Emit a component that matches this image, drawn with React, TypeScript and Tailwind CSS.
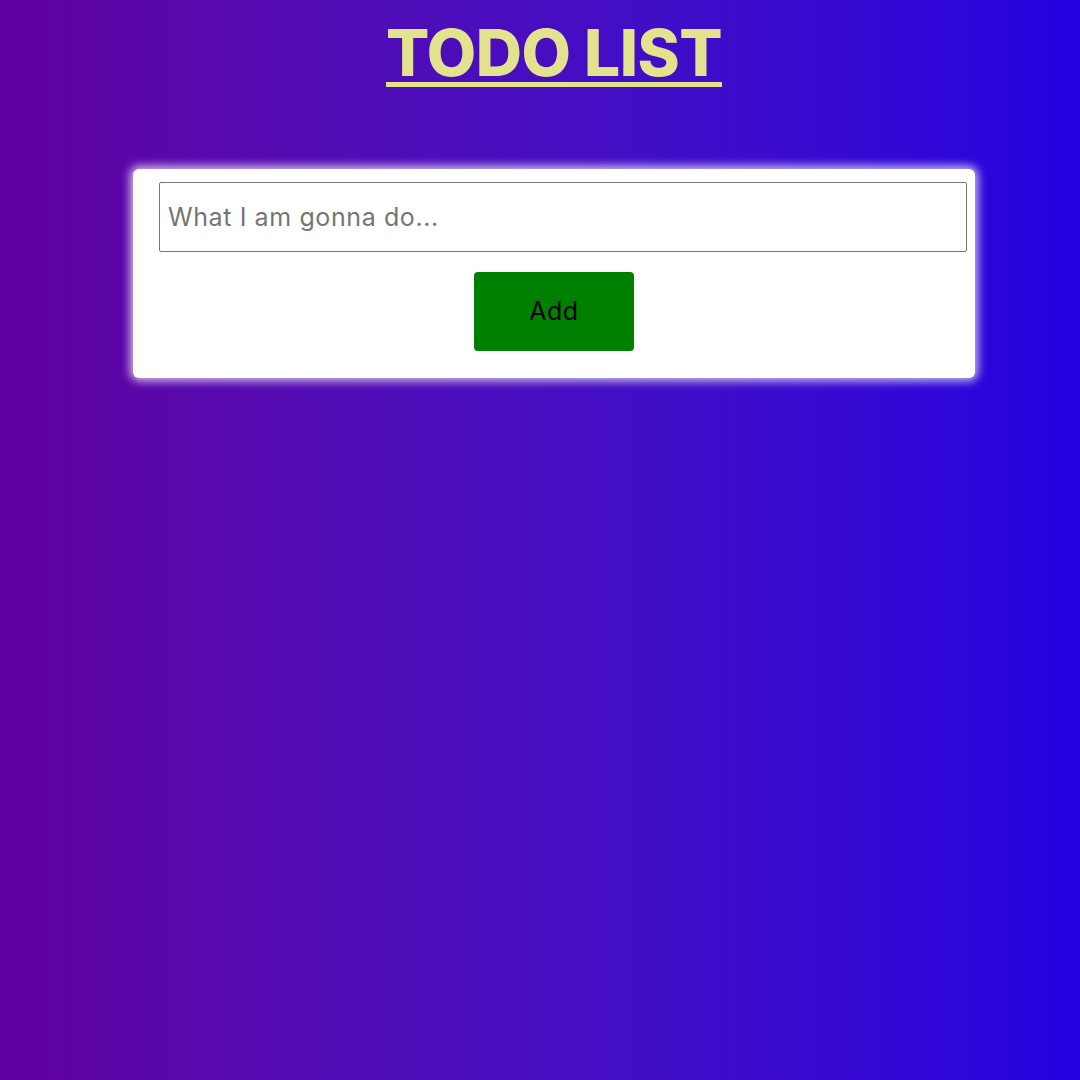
import { useState } from 'react';

export default function App() {
    const [task, setTask] = useState('');

    return (
        <div className="min-h-screen w-full bg-gradient-to-r from-[#6000a1] to-[#2400e0] pl-[28px] font-['Inter',sans-serif]">
            <h1 className="pt-[14px] text-center text-[64px] leading-[78px] font-extrabold tracking-[-0.5px] text-[#e3e38f] underline decoration-[5px] underline-offset-[6px]">
                TODO LIST
            </h1>
            <div className="mx-auto mt-[77px] w-[842px] rounded-md bg-white pt-[13px] pb-[27px] pl-[26px] pr-[8px] shadow-[0_0_10px_3px_rgba(255,255,255,0.75)]">
                <input
                    type="text"
                    placeholder="What I am gonna do..."
                    value={task}
                    onChange={e => setTask(e.target.value)}
                    className="block h-[70px] w-full rounded-[2px] border border-[#767676] px-[8px] text-[25px] tracking-[0.6px] text-black placeholder:text-[#757575] outline-none"
                />
                <div className="mt-[20px] flex justify-center pr-[18px]">
                    <button className="h-[79px] w-[160px] rounded-[4px] bg-[#008000] text-[25px] tracking-[0.5px] text-black">
                        Add
                    </button>
                </div>
            </div>
        </div>
    );
}
